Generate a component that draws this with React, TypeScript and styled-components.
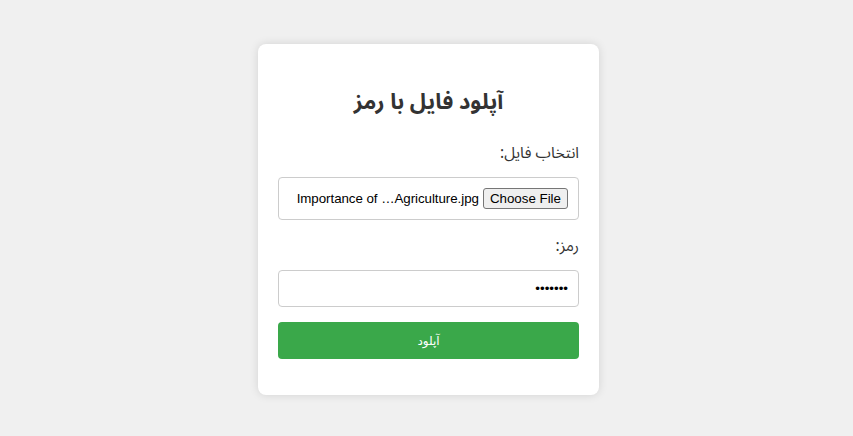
import React from "react";
import styled, { createGlobalStyle } from "styled-components";

const GlobalStyle = createGlobalStyle`
  html, body { margin: 0; padding: 0; }
  body {
    background: #f0f0f0;
    font-family: "Noto Sans Arabic", "Noto Sans", "DejaVu Sans", sans-serif;
  }
`;

const Page = styled.div`
  min-height: 436px;
  display: flex;
  justify-content: center;
  align-items: flex-start;
  padding: 44px 0 0 4px;
  box-sizing: border-box;
  direction: rtl;
`;

const Card = styled.div`
  width: 341px;
  box-sizing: border-box;
  background: #fff;
  border-radius: 8px;
  padding: 20px 20px 21px;
  box-shadow: 0 0 10px rgba(0, 0, 0, 0.12);
`;

const Title = styled.h2`
  margin: 18px 0 20px;
  text-align: center;
  font-size: 22px;
  line-height: 40px;
  font-weight: 700;
  color: #333;
`;

const Label = styled.label`
  display: block;
  font-size: 15.5px;
  line-height: 22px;
  color: #333;
  margin-bottom: 13px;
`;

const FileBox = styled.div`
  height: 43px;
  box-sizing: border-box;
  border: 1px solid #ccc;
  border-radius: 4px;
  padding: 0 10px;
  margin-bottom: 15px;
  display: flex;
  align-items: center;
  gap: 4px;
  font-family: "Liberation Sans", Arial, sans-serif;
  font-size: 13.33px;
  color: #000;
`;

const NativeButton = styled.span`
  display: inline-block;
  border: 1px solid #767676;
  border-radius: 3px;
  background: #efefef;
  padding: 1px 6px;
  line-height: 17px;
  font-size: 13.33px;
  color: #000;
`;

const FileName = styled.span`
  direction: ltr;
  white-space: nowrap;
  letter-spacing: -0.05px;
`;

const PasswordInput = styled.input`
  display: block;
  width: 100%;
  height: 37px;
  box-sizing: border-box;
  border: 1px solid #ccc;
  border-radius: 4px;
  padding: 0 10px;
  margin: 0 0 15px;
  font-family: "Liberation Sans", Arial, sans-serif;
  font-size: 13.33px;
  outline: none;
`;

const SubmitButton = styled.button`
  display: block;
  width: 100%;
  height: 37px;
  border: none;
  border-radius: 4px;
  background: #3aa84a;
  color: #fff;
  font-family: "DejaVu Sans", sans-serif;
  font-size: 12px;
  margin: 0 0 15px;
  cursor: pointer;
`;

export default function App() {
  return (
    <>
      <GlobalStyle />
      <Page>
        <Card>
          <Title>آپلود فایل با رمز</Title>
          <Label>انتخاب فایل:</Label>
          <FileBox>
            <NativeButton>Choose File</NativeButton>
            <FileName>Importance of …Agriculture.jpg</FileName>
          </FileBox>
          <Label>رمز:</Label>
          <PasswordInput type="password" defaultValue="1234567" />
          <SubmitButton type="button">آپلود</SubmitButton>
        </Card>
      </Page>
    </>
  );
}
